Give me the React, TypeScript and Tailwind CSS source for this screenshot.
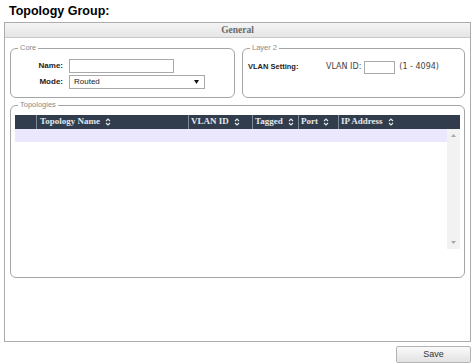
import React from "react";

function SortIcon() {
  return (
    <svg width="6" height="8" viewBox="0 0 6 8" className="ml-[5px] shrink-0">
      <path d="M1 3 L3 1 L5 3 M1 5 L3 7 L5 5" fill="none" stroke="#e4e7eb" strokeWidth="1.1" />
    </svg>
  );
}

const columns = [
  { label: "", width: "w-[21px]" },
  { label: "Topology Name", width: "w-[152px]" },
  { label: "VLAN ID", width: "w-[64px]" },
  { label: "Tagged", width: "w-[46px]" },
  { label: "Port", width: "w-[40px]" },
  { label: "IP Address", width: "flex-1" },
];

export default function App() {
  return (
    <div className="w-[475px] h-[363px] bg-white overflow-hidden font-['Liberation_Sans',Arial,sans-serif] text-[#333]">
      <div className="h-[22px] pl-[9px] pt-[4px] text-[12.5px] leading-[15px] font-bold text-black">
        Topology Group:
      </div>

      <div className="mx-[4px] h-[320px] border border-[#acacac]">
        <div className="h-[15px] border-b border-[#c8c8c8] bg-gradient-to-b from-[#f4f4f4] to-[#e6e6e6] text-center text-[9.5px] leading-[14px] font-bold text-[#6a6a6a] font-['Liberation_Serif',serif]">
          General
        </div>

        <div className="px-[5px] pt-[5px]">
          <div className="flex gap-[7px]">
            <fieldset className="w-[225px] h-[55px] rounded-[6px] border border-[#a5a5a5]">
              <legend className="ml-[7px] px-[2px] text-[7.5px] leading-[10px] text-[#8a8a8a]">Core</legend>
              <div className="pt-[6px] flex flex-col gap-[2px]">
                <div className="flex items-center h-[14px]">
                  <span className="w-[52px] text-right text-[8px] font-bold text-[#222]">Name:</span>
                  <input className="ml-[6px] w-[105px] h-[14px] border border-[#a9a9a9] bg-white outline-none" />
                </div>
                <div className="flex items-center h-[14px]">
                  <span className="w-[52px] text-right text-[8px] font-bold text-[#222]">Mode:</span>
                  <div className="ml-[6px] w-[136px] h-[14px] border border-[#a9a9a9] bg-white flex items-center pl-[4px] pr-[5px] text-[8px] text-[#222]">
                    <span className="flex-1">Routed</span>
                    <svg width="5" height="4" viewBox="0 0 5 4">
                      <path d="M0 0 L5 0 L2.5 4 Z" fill="#111" />
                    </svg>
                  </div>
                </div>
              </div>
            </fieldset>

            <fieldset className="flex-1 h-[55px] rounded-[6px] border border-[#a5a5a5]">
              <legend className="ml-[7px] px-[2px] text-[7.5px] leading-[10px] text-[#8a8a8a]">Layer 2</legend>
              <div className="pt-[7px] pl-[5px] flex items-center h-[21px]">
                <span className="w-[78px] text-[7.5px] font-bold text-[#222]">VLAN Setting:</span>
                <span className="text-[8px] font-['DejaVu_Sans',sans-serif] text-[#444]">VLAN ID:</span>
                <input className="ml-[3px] w-[31px] h-[13px] border border-[#a9a9a9] bg-white outline-none" />
                <span className="ml-[4px] text-[8px] font-['DejaVu_Sans',sans-serif] text-[#444]">(1 - 4094)</span>
              </div>
            </fieldset>
          </div>

          <fieldset className="mt-[2px] h-[178px] rounded-[6px] border border-[#a5a5a5]">
            <legend className="ml-[7px] px-[2px] text-[7.5px] leading-[10px] text-[#8a8a8a]">Topologies</legend>
            <div className="pt-[5px] pl-[4px] pr-[4px]">
              <div className="flex h-[14px] bg-[#313d4c] font-['Liberation_Serif',serif] text-[9px] font-bold text-[#e4e7eb]">
                {columns.map((c, i) => (
                  <div
                    key={i}
                    className={`${c.width} flex items-center ${i > 0 ? "border-l border-[#7f8a98]" : ""} ${i === 1 ? "pl-[3px]" : "pl-[2px]"}`}
                  >
                    {c.label && (
                      <>
                        <span>{c.label}</span>
                        <SortIcon />
                      </>
                    )}
                  </div>
                ))}
              </div>
              <div className="flex h-[120px]">
                <div className="flex-1">
                  <div className="h-[13px] bg-[#ebe7fc]" />
                </div>
                <div className="w-[13px] bg-[#f2f2f2] flex flex-col items-center justify-between py-[5px]">
                  <svg width="5" height="3" viewBox="0 0 5 3">
                    <path d="M0 3 L5 3 L2.5 0 Z" fill="#a8a8a8" />
                  </svg>
                  <svg width="5" height="3" viewBox="0 0 5 3">
                    <path d="M0 0 L5 0 L2.5 3 Z" fill="#a8a8a8" />
                  </svg>
                </div>
              </div>
            </div>
          </fieldset>
        </div>
      </div>

      <div className="flex justify-end pr-[4px] mt-[4px]">
        <button className="w-[75px] h-[17px] border border-[#b4b4b4] rounded-[2px] bg-gradient-to-b from-[#fafafa] to-[#e2e2e2] text-[9px] leading-[15px] text-[#333]">
          Save
        </button>
      </div>
    </div>
  );
}
